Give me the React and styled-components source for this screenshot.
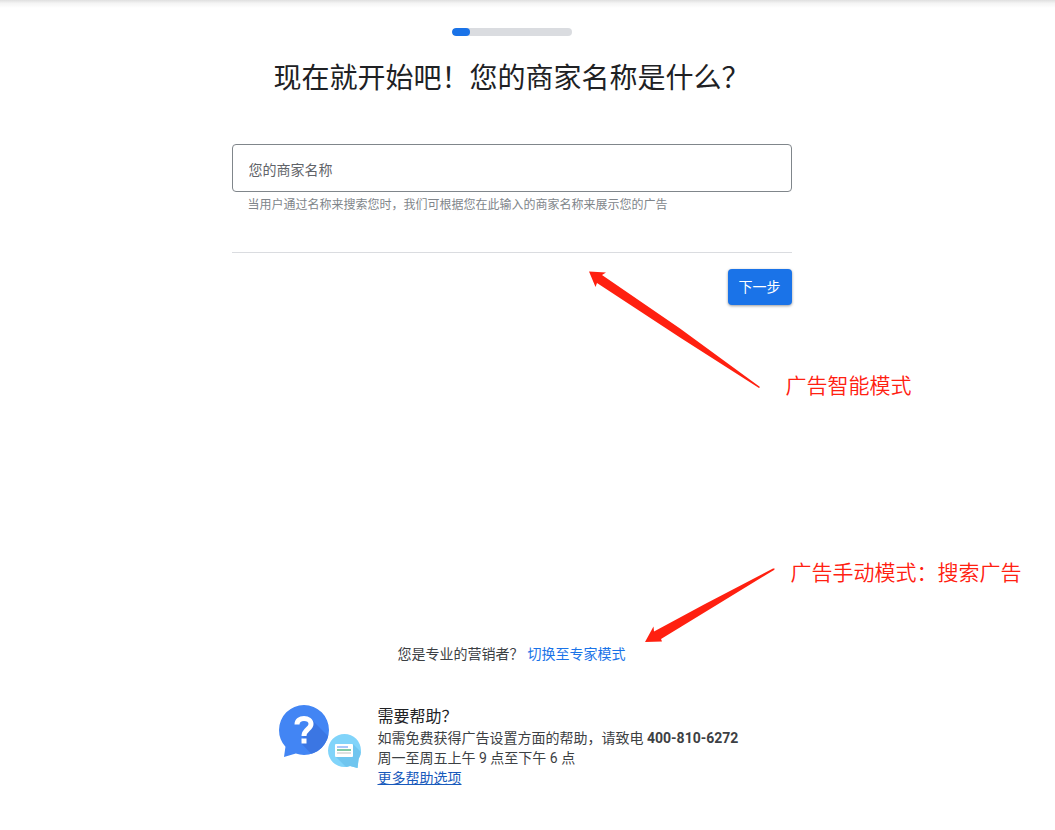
import React, { useState } from 'react';
import styled, { createGlobalStyle } from 'styled-components';

const GlobalStyle = createGlobalStyle`
  body {
    margin: 0;
    background: #fff;
    color: #3c4043;
    font-family: Roboto, 'Noto Sans CJK SC', sans-serif;
    font-size: 14px;
    line-height: 20px;
  }
`;

const Page = styled.div`
  overflow: hidden;
`;

const TopShadow = styled.div`
  height: 8px;
  background: linear-gradient(#dfdfdf, #f4f4f4 40%, #fff);
`;

const Main = styled.main`
  display: flex;
  flex-direction: column;
  align-items: center;
  padding: 20px 32px 40px 0;
`;

const Progress = styled.div`
  width: 120px;
  height: 8px;
  border-radius: 4px;
  background: #dadce0;
  overflow: hidden;
`;

const ProgressFill = styled.div`
  height: 100%;
  border-radius: 4px;
  background: #1a73e8;
`;

const Title = styled.h1`
  margin: 24px 0 46px;
  font-size: 28px;
  font-weight: 400;
  line-height: 38px;
  color: #202124;
`;

const Form = styled.form`
  position: relative;
  box-sizing: border-box;
  width: 100%;
  max-width: 560px;
`;

const NameInput = styled.input`
  display: block;
  box-sizing: border-box;
  width: 100%;
  height: 48px;
  padding: 4px 16px 0;
  border: 1px solid #80868b;
  border-radius: 4px;
  background: #fff;
  color: #202124;
  font: inherit;

  &::placeholder {
    color: #5f6368;
    opacity: 1;
  }
`;

const Hint = styled.p`
  margin: 4px 16px 0;
  font-size: 12px;
  line-height: 18px;
  color: #80858a;
`;

const Actions = styled.div`
  display: flex;
  justify-content: flex-end;
  margin-top: 38px;
  padding-top: 16px;
  border-top: 1px solid #dadce0;
`;

const NextButton = styled.button`
  width: 64px;
  height: 36px;
  padding: 0;
  border: 0;
  border-radius: 4px;
  background: #1a73e8;
  box-shadow: 0 1px 3px rgba(0, 0, 0, 0.4);
  color: #fff;
  font: inherit;
  cursor: pointer;
`;

const Expert = styled.div`
  position: relative;
  margin: 339px 0 41px;
`;

const ExpertLink = styled.a`
  margin-left: 4px;
  color: #1a73e8;
  text-decoration: none;
`;

const Help = styled.section`
  display: flex;
  gap: 16px;
  width: 468px;
  max-width: 100%;
`;

const HelpText = styled.div`
  p {
    margin: 0;
  }
`;

const HelpTitle = styled.h2`
  margin: 0;
  font-size: 16px;
  font-weight: 400;
  line-height: 23px;
  color: #202124;
`;

const HelpLink = styled.a`
  color: #185abc;
  text-decoration: underline;
`;

// notes pinned over the page, measured from the block they explain
const Note = styled.div`
  position: absolute;
  left: ${props => props.$left}px;
  top: ${props => props.$top}px;
  display: flex;
  align-items: ${props => props.$align};
  gap: ${props => props.$gap}px;
  color: #ff2010;
  font-size: 21px;
  font-weight: 350;
  line-height: 28px;
  white-space: nowrap;
  pointer-events: none;

  svg {
    flex: none;
  }
`;

const HelpIcon = () => (
  <svg width="84" height="64" viewBox="0 0 84 64" aria-hidden="true">
    <defs>
      <clipPath id="bigBubble">
        <circle cx="26" cy="25" r="25" />
        <path d="M8 38L6 52L20 48L26 25z" />
      </clipPath>
      <clipPath id="smallBubble">
        <circle cx="66.500" cy="45.500" r="16.500" />
        <path d="M81 51L79.500 63L70 60.500L66 46z" />
      </clipPath>
    </defs>
    <g clipPath="url(#bigBubble)">
      <rect width="52" height="54" fill="#4285f4" />
      <path d="M33 14L54 35V54H38L23 38l5-12z" fill="#3b76e3" />
    </g>
    <path
      d="M19 19.500c0-4 3-6 7-6s7 2 7 5.500c0 5-7 5.500-7 12"
      fill="none"
      stroke="#fff"
      strokeWidth="5"
    />
    <rect x="23.500" y="33.500" width="5" height="5" fill="#fff" />
    <g clipPath="url(#smallBubble)">
      <rect x="48" y="28" width="35" height="36" fill="#81d4fa" />
      <path d="M75 39l10 10v15H70L57 51z" fill="#6fc5ef" />
    </g>
    <rect x="57" y="39" width="18" height="13" rx="1" fill="#fff" />
    <rect x="59" y="41" width="11" height="2" fill="#a9c7fb" />
    <rect x="59" y="44" width="14" height="2" fill="#81c9a5" />
    <rect x="59" y="47" width="14" height="2" fill="#e0e0e0" />
  </svg>
);

const App = () => {
  const [name, setName] = useState('');
  const progress = 15;

  return (
    <Page>
      <GlobalStyle />
      <TopShadow />
      <Main>
        <Progress>
          <ProgressFill style={{ width: `${progress}%` }} />
        </Progress>
        <Title>现在就开始吧！您的商家名称是什么？</Title>
        <Form onSubmit={e => e.preventDefault()}>
          <NameInput
            type="text"
            aria-label="您的商家名称"
            aria-describedby="name-hint"
            placeholder="您的商家名称"
            value={name}
            onChange={e => setName(e.target.value)}
          />
          <Hint id="name-hint">
            当用户通过名称来搜索您时，我们可根据您在此输入的商家名称来展示您的广告
          </Hint>
          <Actions>
            <NextButton type="submit">下一步</NextButton>
          </Actions>
          <Note $left={356} $top={127} $align="flex-end" $gap={26}>
            <svg width="172" height="129" viewBox="0 0 172 129" aria-hidden="true">
              <path
                d="M1 0.500L18 1.500L14 4L92 57.500L172 116L171 117L92 66.500L9 12L7.500 16z"
                fill="#ff2010"
              />
            </svg>
            <span>广告智能模式</span>
          </Note>
        </Form>
        <Expert>
          您是专业的营销者？
          <ExpertLink href="#expert">切换至专家模式</ExpertLink>
          <Note $left={247} $top={-85} $align="flex-start" $gap={16}>
            <svg width="130" height="84" viewBox="0 0 130 84" aria-hidden="true">
              <path
                d="M0 83L8.500 67.500L9 72.500L60 45L128 9.500Q131 9 129 11L70 47L16 80L17 82.500z"
                fill="#ff2010"
              />
            </svg>
            <span>广告手动模式：搜索广告</span>
          </Note>
        </Expert>
        <Help>
          <HelpIcon />
          <HelpText>
            <HelpTitle>需要帮助？</HelpTitle>
            <p>
              如需免费获得广告设置方面的帮助，请致电 <strong>400-810-6272</strong>
            </p>
            <p>周一至周五上午 9 点至下午 6 点</p>
            <HelpLink href="#help">更多帮助选项</HelpLink>
          </HelpText>
        </Help>
      </Main>
    </Page>
  );
};

export default App;
